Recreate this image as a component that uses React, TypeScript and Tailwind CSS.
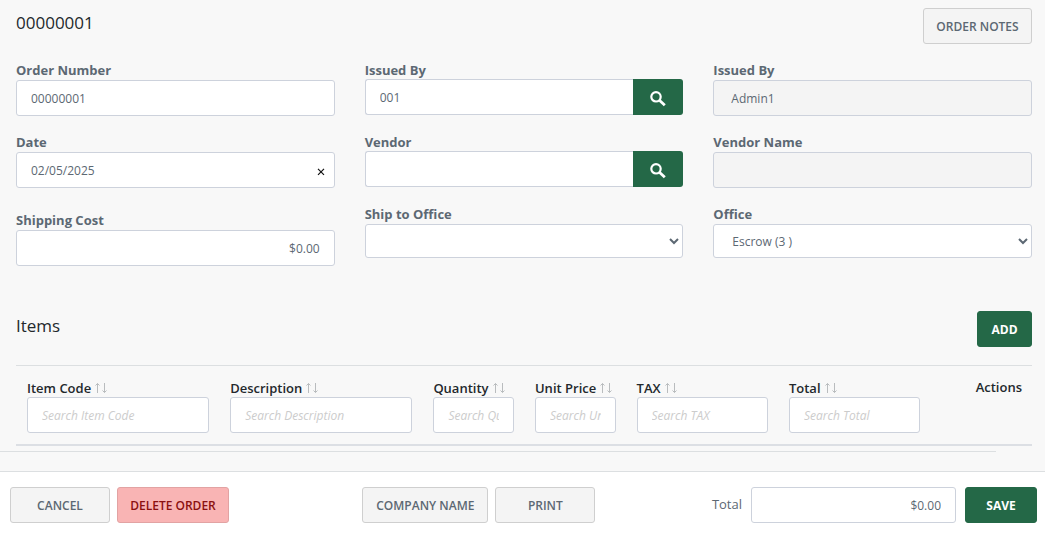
import { useState } from 'react';
import type { ReactNode } from 'react';

const inputClass =
  'block h-9 w-full min-w-0 rounded-[3px] border border-[#cdd2dc] bg-white px-[14px] text-[12px] font-normal text-[#5c6873] outline-none placeholder:italic placeholder:text-[#cccccc]';

const readOnlyClass =
  'block h-9 w-full rounded-[3px] border border-[#cdd2dc] bg-[#f4f4f4] px-[17px] text-[12px] text-[#5c6873] outline-none';

const selectClass =
  'block h-[34px] w-full rounded-[3px] border border-[#cdd2dc] bg-white pl-[14px] text-[12px] text-[#5c6873] outline-none';

type FieldProps = { id: string; label: string; children: ReactNode };

function Field({ id, label, children }: FieldProps) {
  return (
    <div>
      <label htmlFor={id} className="block h-5 text-[13px] leading-5 font-bold text-[#5c6873]">
        {label}
      </label>
      {children}
    </div>
  );
}

type SearchFieldProps = { id: string; label: string; value: string };

function SearchField({ id, label, value }: SearchFieldProps) {
  return (
    <div className="pb-px">
      <label htmlFor={id} className="block h-[19px] text-[13px] leading-5 font-bold text-[#5c6873]">
        {label}
      </label>
      <div className="flex">
        <input
          id={id}
          defaultValue={value}
          className="h-9 min-w-0 flex-1 rounded-l-[3px] border border-r-0 border-[#cdd2dc] bg-white px-[14px] text-[12px] text-[#5c6873] outline-none"
        />
        <button
          type="button"
          aria-label={`Search ${label}`}
          className="flex h-9 w-[50px] items-center justify-center rounded-r-[3px] bg-[#246847] pt-1 text-white"
        >
          <SearchIcon />
        </button>
      </div>
    </div>
  );
}

function SearchIcon() {
  return (
    <svg width="16" height="16" viewBox="0 0 16 16" fill="none" stroke="currentColor">
      <circle cx="6" cy="5.8" r="4.7" strokeWidth="2.2" />
      <path d="M9.4 9.2 14.8 14.2" strokeWidth="2.8" />
    </svg>
  );
}

function SortIcon() {
  return (
    <svg width="12" height="12" viewBox="0 0 12 12" fill="none" stroke="#b9bcbe" className="shrink-0">
      <path d="M2.5 11V1.5M0.5 3.5l2-2 2 2" />
      <path d="M9.5 1v9.5M7.5 8.5l2 2 2-2" />
    </svg>
  );
}

type ButtonProps = { variant?: 'default' | 'danger' | 'primary'; width: string; children: ReactNode };

const variants = {
  default: 'border-[#cfcfcf] bg-[#f4f4f4] font-semibold text-[#5c6873]',
  danger: 'border-[#e2a3a3] bg-[#f9b4b4] font-semibold text-[#8b1010]',
  primary: 'border-[#246847] bg-[#246847] font-bold text-white',
};

function Button({ variant = 'default', width, children }: ButtonProps) {
  return (
    <button
      type="button"
      className={`flex h-9 shrink-0 items-center justify-center rounded-[3px] border pt-px text-[12px] whitespace-nowrap ${variants[variant]} ${width}`}
    >
      {children}
    </button>
  );
}

const columns = [
  { name: 'Item Code', width: 'w-[20%]' },
  { name: 'Description', width: 'w-[20%]' },
  { name: 'Quantity', width: 'w-[10%]' },
  { name: 'Unit Price', width: 'w-[10%]' },
  { name: 'TAX', width: 'w-[15%]' },
  { name: 'Total', width: 'w-[15%]' },
];

function ItemsTable() {
  return (
    <table className="w-full table-fixed border-separate border-spacing-0 border-t border-b-2 border-t-[#dcdfe1] border-b-[#dcdfe4]">
      <thead>
        <tr>
          {columns.map(({ name, width }) => (
            <th key={name} className={`${width} py-[11px] pr-[10px] pl-[11px] text-left align-top font-semibold`}>
              <span className="flex h-5 items-center gap-1 pt-px text-[13px] leading-5 whitespace-nowrap text-[#23282c]">
                {name}
                <SortIcon />
              </span>
              <input aria-label={`Search ${name}`} placeholder={`Search ${name}`} className={inputClass} />
            </th>
          ))}
          <th className="py-[11px] pr-[10px] text-right align-top text-[13px] leading-5 font-semibold text-[#23282c]">
            Actions
          </th>
        </tr>
      </thead>
    </table>
  );
}

export default function App() {
  const [date, setDate] = useState('02/05/2025');

  return (
    <div className="flex min-h-screen flex-col bg-[#f8f8f8] font-['Open_Sans',sans-serif] text-[#23282c]">
      <main className="flex-1">
        <div className="pr-[13px] pl-4">
          <header className="flex items-start justify-between pt-2">
            <h1 className="pt-[3px] text-[17px] leading-6">00000001</h1>
            <Button width="w-[109px]">ORDER NOTES</Button>
          </header>

          <form className="grid grid-cols-3 gap-[30px] pt-4">
            <div className="flex flex-col gap-4">
              <Field id="order-number" label="Order Number">
                <input id="order-number" defaultValue="00000001" className={inputClass} />
              </Field>
              <Field id="date" label="Date">
                <div className="relative">
                  <input
                    id="date"
                    value={date}
                    onChange={(e) => setDate(e.target.value)}
                    className={inputClass}
                  />
                  <button
                    type="button"
                    aria-label="Clear date"
                    onClick={() => setDate('')}
                    className="absolute top-4 right-[10px]"
                  >
                    <svg width="8" height="8" viewBox="0 0 8 8" stroke="#111" strokeWidth="1.2">
                      <path d="M1 0.8l6 6M7 0.8L1 6.8" />
                    </svg>
                  </button>
                </div>
              </Field>
              <div className="pt-[6px]">
                <Field id="shipping-cost" label="Shipping Cost">
                  <input id="shipping-cost" defaultValue="$0.00" className={`${inputClass} text-right`} />
                </Field>
              </div>
            </div>

            <div className="flex flex-col gap-4">
              <SearchField id="issued-by" label="Issued By" value="001" />
              <SearchField id="vendor" label="Vendor" value="" />
              <Field id="ship-to" label="Ship to Office">
                <select id="ship-to" className={selectClass}>
                  <option></option>
                </select>
              </Field>
            </div>

            <div className="flex flex-col gap-4">
              <Field id="issued-by-name" label="Issued By">
                <input id="issued-by-name" readOnly value="Admin1" className={readOnlyClass} />
              </Field>
              <Field id="vendor-name" label="Vendor Name">
                <input id="vendor-name" readOnly className={readOnlyClass} />
              </Field>
              <Field id="office" label="Office">
                <select id="office" className={selectClass}>
                  <option>Escrow (3 )</option>
                </select>
              </Field>
            </div>
          </form>

          <div className="flex items-start justify-between pt-[45px] pb-[18px]">
            <h2 className="pt-[3px] text-[17px] leading-6">Items</h2>
            <Button variant="primary" width="w-[55px]">
              ADD
            </Button>
          </div>

          <ItemsTable />
        </div>
        <div className="mt-[5px] mr-[49px] mb-[19px] border-t border-[#dcdfe1]" />
      </main>

      <footer className="grid grid-cols-3 border-t border-[#dcdfe1] bg-white pt-[15px] pb-[10px]">
        <div className="flex gap-[7px] pl-[10px]">
          <Button width="w-[100px]">CANCEL</Button>
          <Button variant="danger" width="w-[112px]">
            DELETE ORDER
          </Button>
        </div>
        <div className="flex gap-[7px] pl-[14px]">
          <Button width="w-[126px]">COMPANY NAME</Button>
          <Button width="w-[100px]">PRINT</Button>
        </div>
        <div className="flex justify-end gap-[9px] pr-2">
          <label htmlFor="total" className="text-[13px] leading-[34px] text-[#5c6873]">
            Total
          </label>
          <input id="total" defaultValue="$0.00" className={`${inputClass} max-w-[205px] text-right`} />
          <Button variant="primary" width="w-[72px]">
            SAVE
          </Button>
        </div>
      </footer>
    </div>
  );
}
